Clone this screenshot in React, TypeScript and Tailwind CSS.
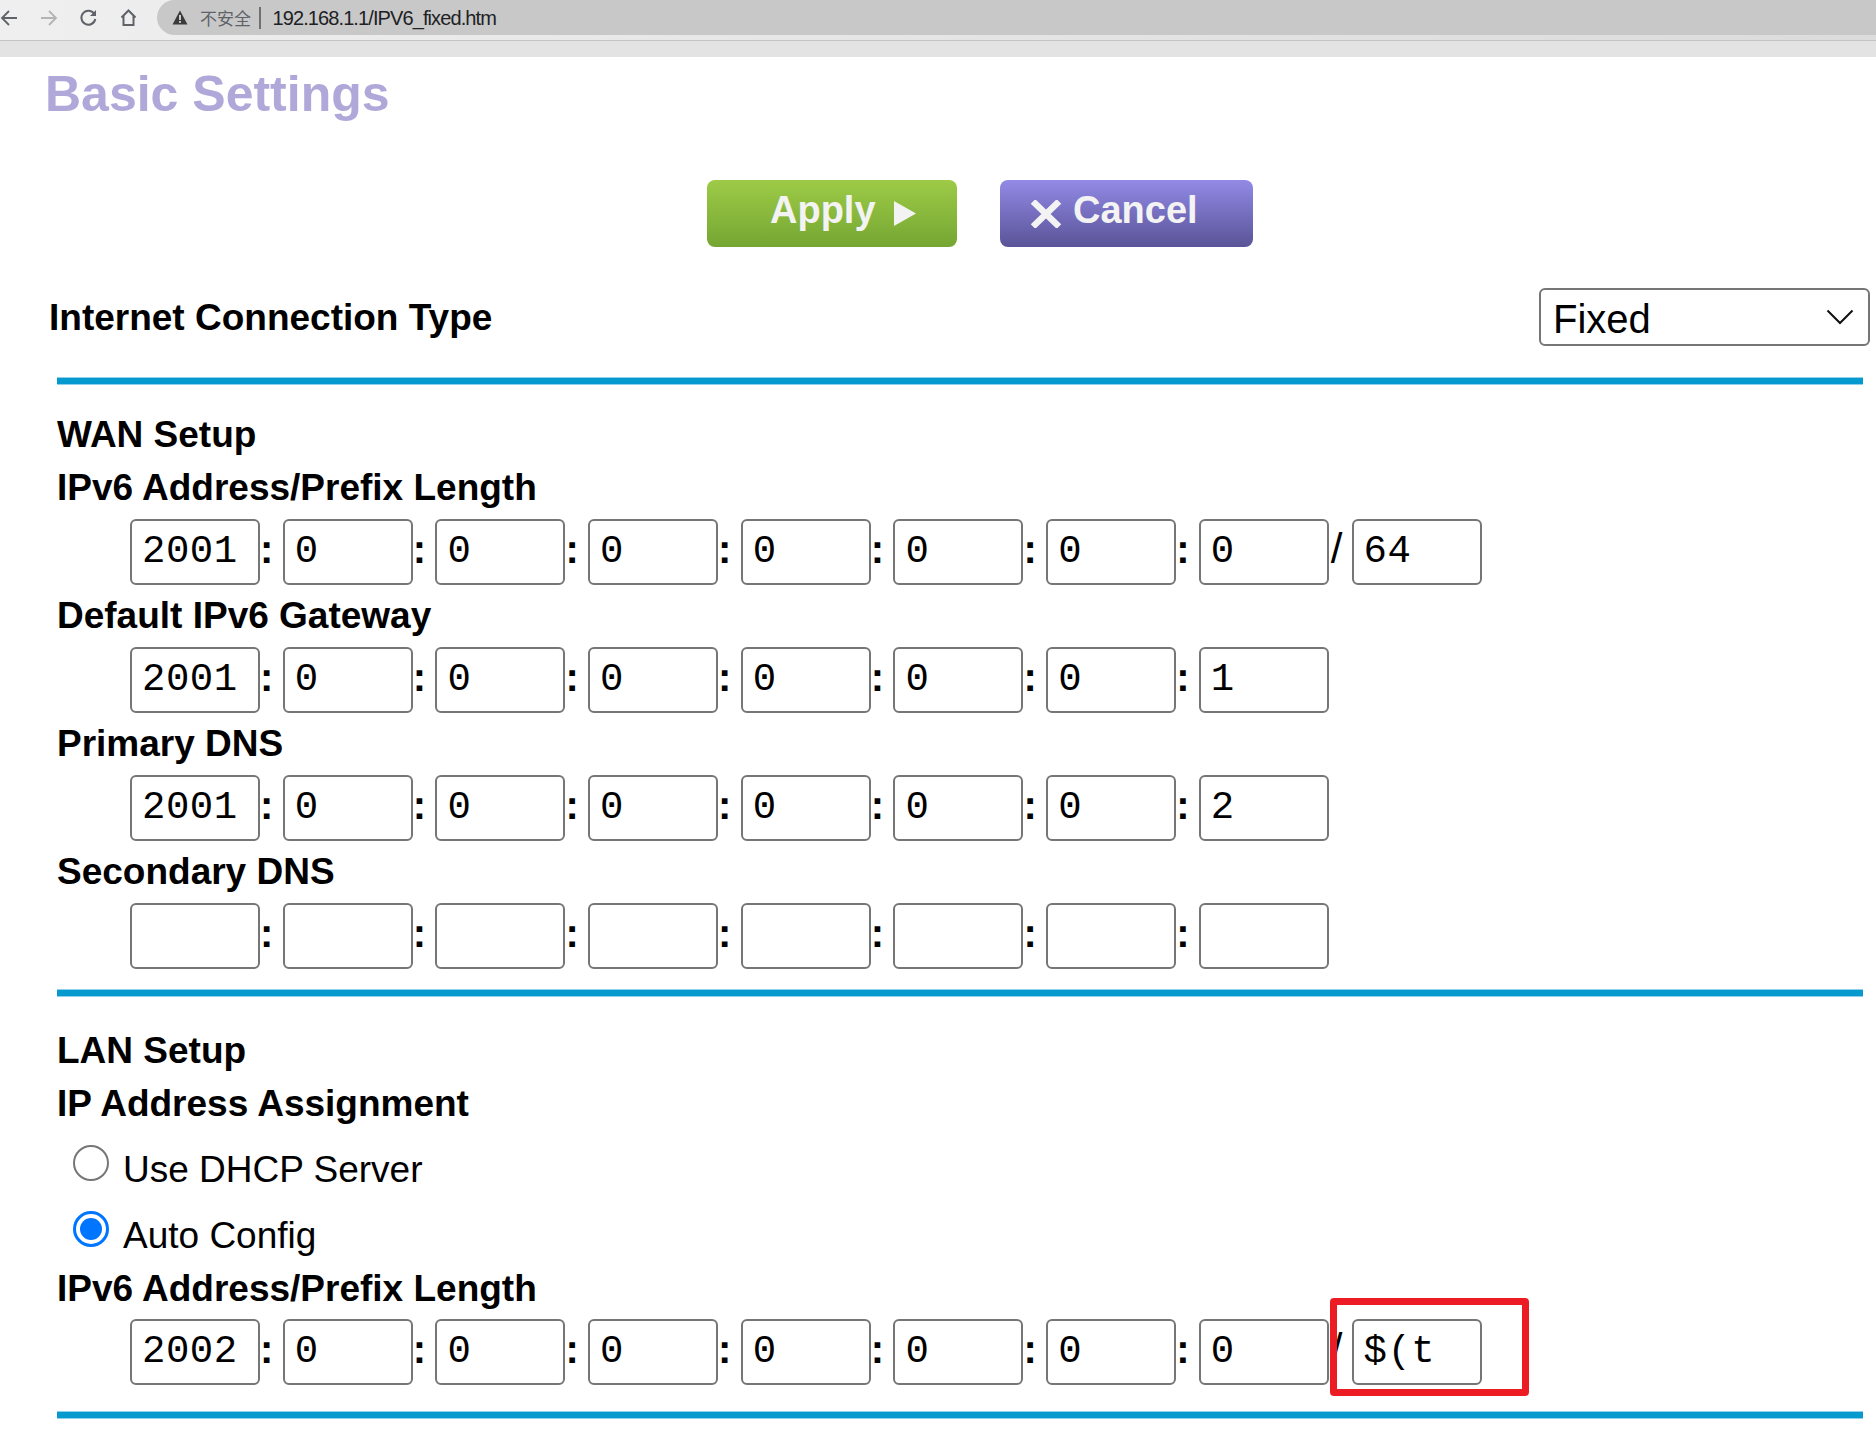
import React from "react";

const MONO = "font-['Liberation_Mono',monospace]";

function Box({ v }: { v: string }) {
  return (
    <div
      className={`w-[130px] h-[66px] shrink-0 border-2 border-[#767676] rounded-[6px] bg-white pl-[10px] ${MONO} text-[39px] leading-[62px] tracking-[0.5px] text-black whitespace-pre overflow-hidden`}
    >
      {v}
    </div>
  );
}

function Colon() {
  return (
    <div className="w-[22.7px] h-[66px] shrink-0 pl-0 text-[40px] leading-[60px] font-bold text-black">
      :
    </div>
  );
}

function Slash() {
  return (
    <div className="w-[22.7px] h-[66px] shrink-0 pl-[2px] text-[42px] leading-[60px] text-black">
      /
    </div>
  );
}

function AddrRow({
  vals,
  prefix,
  highlight,
}: {
  vals: string[];
  prefix?: string;
  highlight?: boolean;
}) {
  return (
    <div className="flex my-[4.5px] pl-[130px]">
      {vals.map((v, i) => (
        <React.Fragment key={i}>
          {i > 0 && <Colon />}
          <Box v={v} />
        </React.Fragment>
      ))}
      {prefix !== undefined && (
        <>
          <Slash />
          <div className="relative">
            <Box v={prefix} />
            {highlight && (
              <div className="absolute left-[-22px] top-[-21px] w-[199px] h-[98px] border-[7px] border-[#ed1c24] rounded-[4px]" />
            )}
          </div>
        </>
      )}
    </div>
  );
}

function Label({ children }: { children: React.ReactNode }) {
  return (
    <div className="pl-[57px] text-[37px] font-bold leading-[53px] text-black whitespace-nowrap">
      {children}
    </div>
  );
}

function BlueLine({ mt }: { mt: string }) {
  return (
    <div
      className={`${mt} ml-[57px] w-[1806px] h-[8px] bg-[#0599cf] border-y-[1.5px] border-[#8fd0ea]`}
    />
  );
}

function Radio({ checked, label }: { checked?: boolean; label: string }) {
  return (
    <div className="h-[66px] flex items-center pl-[73px]">
      {checked ? (
        <div className="w-[36px] h-[36px] rounded-full border-[3.5px] border-[#0075ff] bg-white shrink-0 flex items-center justify-center">
          <div className="w-[22px] h-[22px] rounded-full bg-[#0075ff]" />
        </div>
      ) : (
        <div className="w-[36px] h-[36px] rounded-full border-[2.5px] border-[#767676] bg-white shrink-0" />
      )}
      <span className="ml-[14px] mt-[14px] text-[37px] leading-[43px] text-black">
        {label}
      </span>
    </div>
  );
}

function ChromeBar() {
  return (
    <div>
      <div className="h-[40px] flex bg-linear-to-r from-[#efefef] to-[#dcdcdc] border-b border-[#c4c4c4] box-content">
        <div className="w-[157px] h-[35px] relative shrink-0">
          <svg className="absolute left-0 top-[9px]" width="18" height="18" viewBox="0 0 18 18">
            <path d="M17 9H2M9 2L2 9l7 7" fill="none" stroke="#5f6368" strokeWidth="1.8" />
          </svg>
          <svg className="absolute left-[40px] top-[9px]" width="18" height="18" viewBox="0 0 18 18">
            <path d="M1 9h15M9 2l7 7-7 7" fill="none" stroke="#b4b4b4" strokeWidth="1.8" />
          </svg>
          <svg className="absolute left-[79px] top-[8px]" width="19" height="19" viewBox="0 0 19 19">
            <path d="M15.5 6.2A7 7 0 1 0 16.3 11" fill="none" stroke="#5f6368" strokeWidth="2" />
            <path d="M17 2v6h-6z" fill="#5f6368" />
          </svg>
          <svg className="absolute left-[119px] top-[8px]" width="19" height="19" viewBox="0 0 19 19">
            <path d="M2.5 9.5L9.5 2.5l7 7M4.5 8v9h10V8" fill="none" stroke="#5f6368" strokeWidth="2" strokeLinejoin="miter" />
          </svg>
        </div>
        <div className="flex-1 h-[35px] bg-[#c8c8c8] rounded-l-full flex items-center pl-[15px]">
          <svg width="16" height="15" viewBox="0 0 16 15" className="shrink-0">
            <path d="M8 0.5L15.5 14.5H0.5z" fill="#3a3a3a" />
            <rect x="7.1" y="5" width="1.8" height="5" fill="#dcdcdc" />
            <rect x="7.1" y="11" width="1.8" height="1.8" fill="#dcdcdc" />
          </svg>
          <span className="ml-[12px] text-[17px] leading-[20px] text-[#5f6368] font-['Noto_Sans_CJK_SC',sans-serif]">
            不安全
          </span>
          <span className="ml-[8px] w-[1.5px] h-[22px] bg-[#707070]" />
          <span className="ml-[12px] text-[20px] leading-[22px] tracking-[-0.9px] text-[#202124]">
            192.168.1.1/IPV6_fixed.htm
          </span>
        </div>
      </div>
      <div className="h-[16px] bg-[#e3e3e3]" />
    </div>
  );
}

export default function App() {
  return (
    <div className="w-[1876px] min-h-[1433px] bg-white overflow-hidden font-['Liberation_Sans',Arial,sans-serif] text-black">
      <ChromeBar />

      <div className="mt-[9px] pl-[45px] text-[50px] leading-[57.5px] font-bold text-[#afa8d9]">
        Basic Settings
      </div>

      <div className="mt-[56.5px] flex pl-[707px]">
        <div className="w-[250px] h-[67px] rounded-[8px] bg-linear-to-b from-[#9dcb47] to-[#75a632] flex items-center pl-[63px] pb-[7px] text-[38px] font-bold text-[#f3f3f3]">
          <span className="leading-[44px]">Apply</span>
          <svg className="ml-[18px] mt-[7px]" width="22" height="25" viewBox="0 0 22 25">
            <path d="M0 0L22 12.5L0 25z" fill="#f3f3f3" />
          </svg>
        </div>
        <div className="ml-[43px] w-[253px] h-[67px] rounded-[8px] bg-linear-to-b from-[#938ae6] to-[#5a5498] flex items-center pl-[30px] pb-[7px] text-[38px] font-bold text-[#f3f3f3]">
          <svg className="mt-[7px]" width="32" height="28" viewBox="0 0 32 28">
            <path d="M3 1.5L29 26.5M29 1.5L3 26.5" stroke="#f3f3f3" strokeWidth="6.5" />
          </svg>
          <span className="ml-[11px] leading-[44px]">Cancel</span>
        </div>
      </div>

      <div className="mt-[41px] h-[58px] flex items-center justify-between pl-[49px] pr-[6px]">
        <span className="text-[37px] leading-[43px] font-bold">Internet Connection Type</span>
        <div className="w-[331px] h-[58px] border-2 border-[#767676] rounded-[6px] flex items-center justify-between pl-[12px] pr-[14px]">
          <span className="pt-[4px] text-[40px] leading-[48px]">Fixed</span>
          <svg width="28" height="16" viewBox="0 0 28 16">
            <path d="M1.5 1.5L14 14L26.5 1.5" fill="none" stroke="#111" strokeWidth="2" />
          </svg>
        </div>
      </div>

      <BlueLine mt="mt-[31px]" />

      <div className="mt-[23px]">
        <Label>WAN Setup</Label>
        <Label>IPv6 Address/Prefix Length</Label>
        <AddrRow vals={["2001", "0", "0", "0", "0", "0", "0", "0"]} prefix="64" />
        <Label>Default IPv6 Gateway</Label>
        <AddrRow vals={["2001", "0", "0", "0", "0", "0", "0", "1"]} />
        <Label>Primary DNS</Label>
        <AddrRow vals={["2001", "0", "0", "0", "0", "0", "0", "2"]} />
        <Label>Secondary DNS</Label>
        <AddrRow vals={["", "", "", "", "", "", "", ""]} />
      </div>

      <BlueLine mt="mt-[20px]" />

      <div className="mt-[27px]">
        <Label>LAN Setup</Label>
        <Label>IP Address Assignment</Label>
        <Radio label="Use DHCP Server" />
        <Radio checked label="Auto Config" />
        <Label>IPv6 Address/Prefix Length</Label>
        <AddrRow vals={["2002", "0", "0", "0", "0", "0", "0", "0"]} prefix="$(t" highlight />
      </div>

      <BlueLine mt="mt-[26px]" />
    </div>
  );
}
